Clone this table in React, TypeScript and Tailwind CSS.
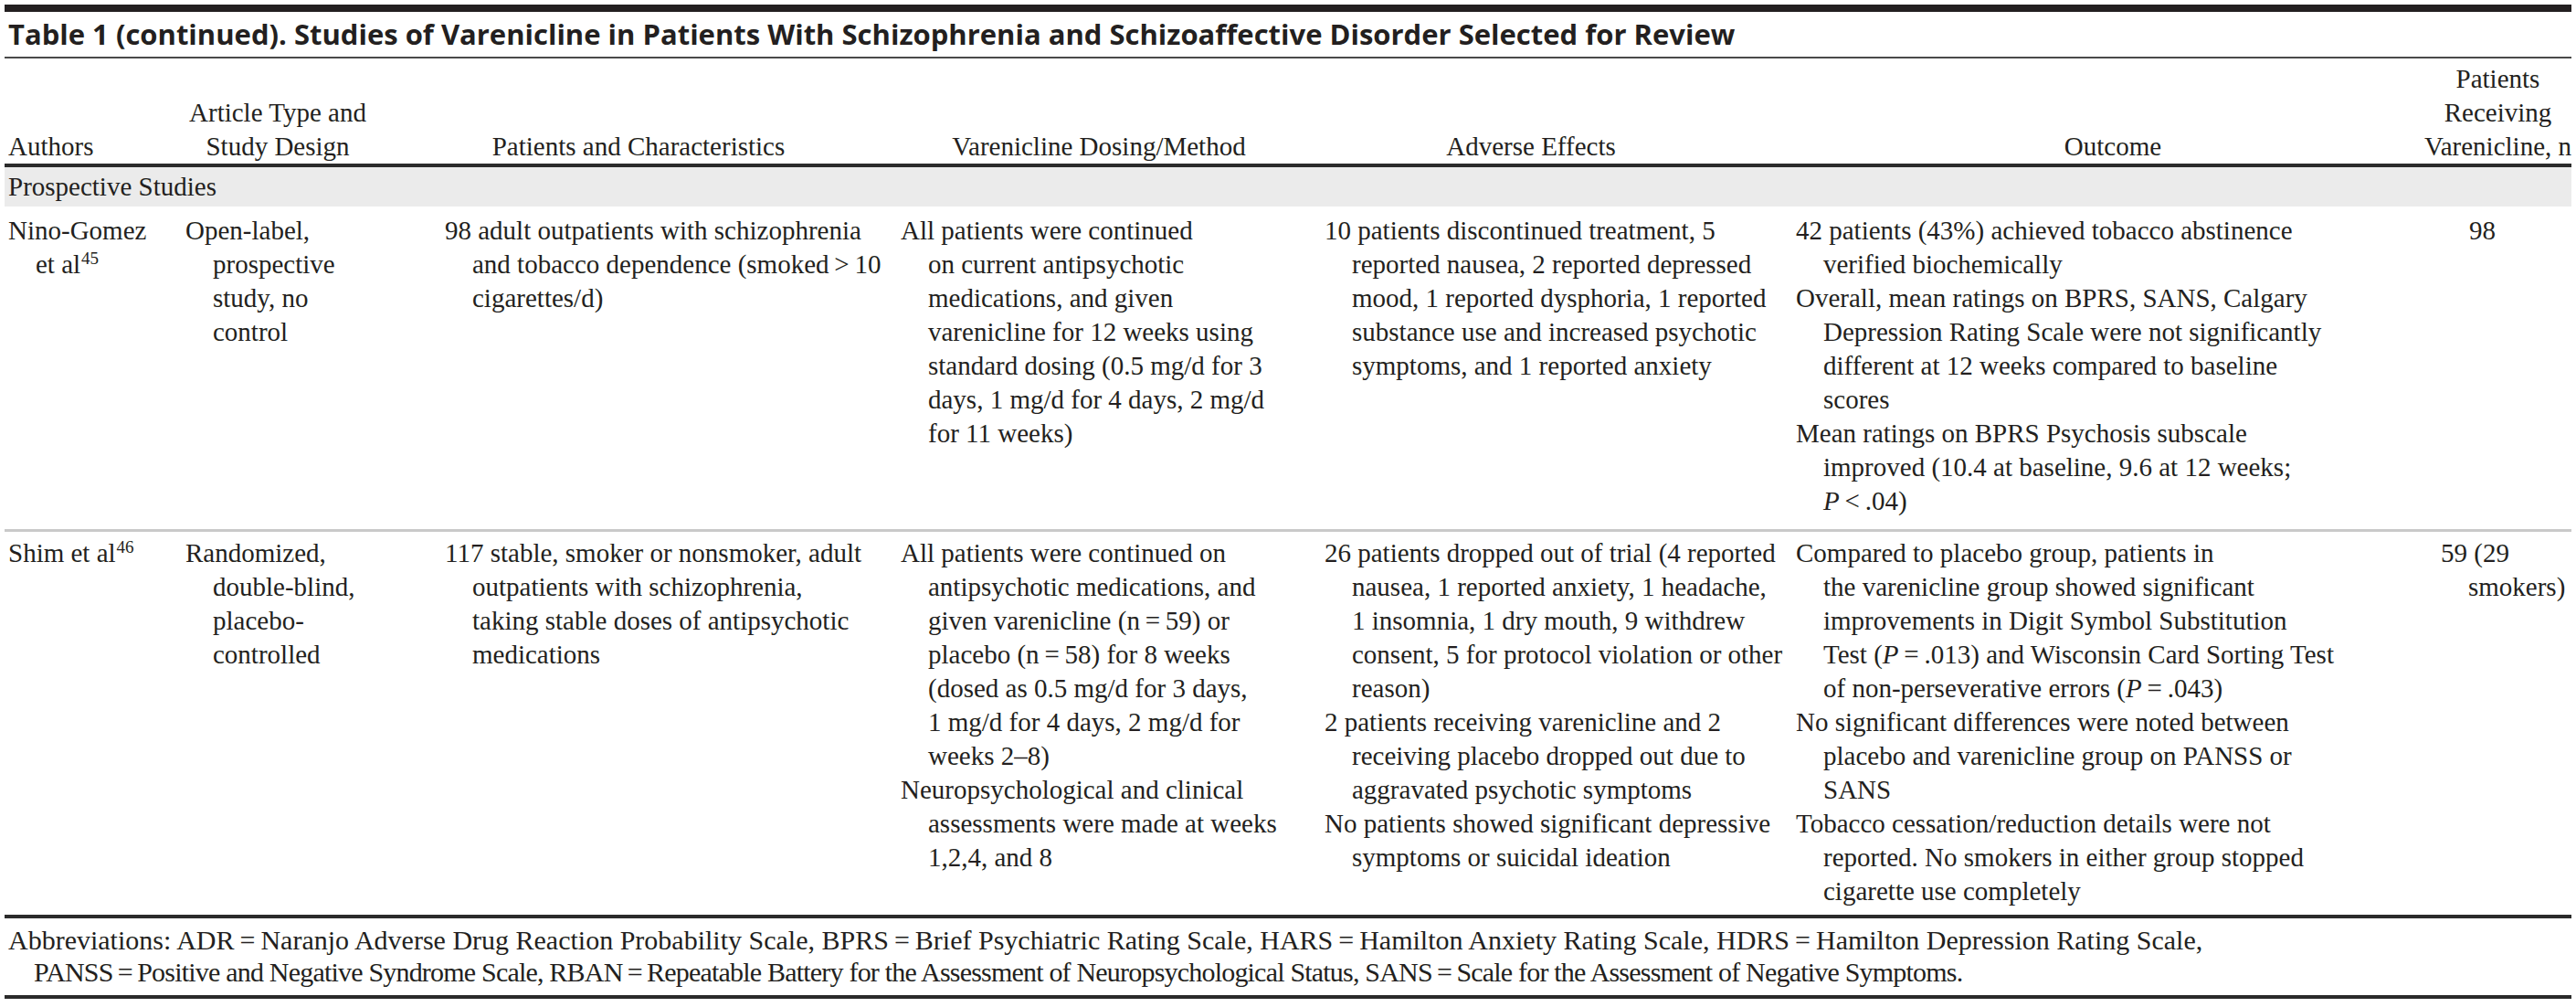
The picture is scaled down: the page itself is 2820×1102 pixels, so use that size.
import React from 'react';

type Line = React.ReactNode;
type Para = Line[];

const cols = 'grid grid-cols-[194px_284px_499px_464px_516px_706px_minmax(0,1fr)]';

const P = () => <i>P</i>;
const T = '\u2009';

function Cell({ paras, className = '' }: { paras: Para[]; className?: string }) {
  return (
    <div className={`pl-[4px] ${className}`}>
      {paras.map((lines, i) => (
        <div key={i} className="pl-[30px] -indent-[30px] whitespace-nowrap">
          {lines.map((line, j) => (
            <React.Fragment key={j}>
              {j > 0 && <br />}
              {line}
            </React.Fragment>
          ))}
        </div>
      ))}
    </div>
  );
}

function Sup({ children }: { children: React.ReactNode }) {
  return <sup className="text-[19px] leading-none relative -top-[10px] ml-[1px]">{children}</sup>;
}

const rows: { paras: Para[]; className?: string }[][] = [
  [
    { paras: [['Nino-Gomez', <>et al<Sup>45</Sup></>]] },
    { paras: [['Open-label,', 'prospective', 'study, no', 'control']] },
    {
      paras: [[
        '98 adult outpatients with schizophrenia',
        `and tobacco dependence (smoked${T}>${T}10`,
        'cigarettes/d)',
      ]],
    },
    {
      paras: [[
        'All patients were continued',
        'on current antipsychotic',
        'medications, and given',
        'varenicline for 12 weeks using',
        'standard dosing (0.5 mg/d for 3',
        'days, 1 mg/d for 4 days, 2 mg/d',
        'for 11 weeks)',
      ]],
    },
    {
      paras: [[
        '10 patients discontinued treatment, 5',
        'reported nausea, 2 reported depressed',
        'mood, 1 reported dysphoria, 1 reported',
        'substance use and increased psychotic',
        'symptoms, and 1 reported anxiety',
      ]],
    },
    {
      paras: [
        ['42 patients (43%) achieved tobacco abstinence', 'verified biochemically'],
        [
          'Overall, mean ratings on BPRS, SANS, Calgary',
          'Depression Rating Scale were not significantly',
          'different at 12 weeks compared to baseline',
          'scores',
        ],
        [
          'Mean ratings on BPRS Psychosis subscale',
          'improved (10.4 at baseline, 9.6 at 12 weeks;',
          <><P />{T}&lt;{T}.04)</>,
        ],
      ],
    },
    { paras: [['98']], className: 'pl-[35px]' },
  ],
  [
    { paras: [[<>Shim et al<Sup>46</Sup></>]] },
    { paras: [['Randomized,', 'double-blind,', 'placebo-', 'controlled']] },
    {
      paras: [[
        '117 stable, smoker or nonsmoker, adult',
        'outpatients with schizophrenia,',
        'taking stable doses of antipsychotic',
        'medications',
      ]],
    },
    {
      paras: [
        [
          'All patients were continued on',
          'antipsychotic medications, and',
          `given varenicline (n${T}=${T}59) or`,
          `placebo (n${T}=${T}58) for 8 weeks`,
          '(dosed as 0.5 mg/d for 3 days,',
          '1 mg/d for 4 days, 2 mg/d for',
          'weeks 2\u20138)',
        ],
        ['Neuropsychological and clinical', 'assessments were made at weeks', '1,2,4, and 8'],
      ],
    },
    {
      paras: [
        [
          '26 patients dropped out of trial (4 reported',
          'nausea, 1 reported anxiety, 1 headache,',
          '1 insomnia, 1 dry mouth, 9 withdrew',
          'consent, 5 for protocol violation or other',
          'reason)',
        ],
        [
          '2 patients receiving varenicline and 2',
          'receiving placebo dropped out due to',
          'aggravated psychotic symptoms',
        ],
        ['No patients showed significant depressive', 'symptoms or suicidal ideation'],
      ],
    },
    {
      paras: [
        [
          'Compared to placebo group, patients in',
          'the varenicline group showed significant',
          'improvements in Digit Symbol Substitution',
          <>Test (<P />{T}={T}.013) and Wisconsin Card Sorting Test</>,
          <>of non-perseverative errors (<P />{T}={T}.043)</>,
        ],
        [
          'No significant differences were noted between',
          'placebo and varenicline group on PANSS or',
          'SANS',
        ],
        [
          'Tobacco cessation/reduction details were not',
          'reported. No smokers in either group stopped',
          'cigarette use completely',
        ],
      ],
    },
    { paras: [['59 (29', 'smokers)']] },
  ],
];

export default function App() {
  return (
    <div className="w-[2820px] h-[1102px] overflow-hidden bg-white px-[5px] text-[#231f20] font-['Liberation_Serif','Times_New_Roman',serif] text-[29px] leading-[37px]">
      <div className="mt-[5px] h-[8px] bg-[#231f20]" />
      <h1 className="mt-[4px] pl-[4px] font-['Open_Sans',sans-serif] font-bold text-[31px] leading-[40px] whitespace-nowrap">
        Table 1 (continued). Studies of Varenicline in Patients With Schizophrenia and Schizoaffective Disorder Selected for Review
      </h1>
      <div className="mt-[5px] h-[2px] bg-[#4a4a4a]" />

      {/* Header */}
      <div className={`${cols} items-end pt-[4px]`}>
        <div className="pl-[4px]">Authors</div>
        <div className="pl-[4px] pr-[78px] text-center">Article Type and<br />Study Design</div>
        <div className="pl-[4px] pr-[71px] text-center">Patients and Characteristics</div>
        <div className="pl-[4px] pr-[26px] text-center">Varenicline Dosing/Method</div>
        <div className="pl-[4px] pr-[60px] text-center">Adverse Effects</div>
        <div className="pl-[4px] pr-[8px] text-center">Outcome</div>
        <div className="flex justify-end">
          <div className="text-center whitespace-nowrap">Patients<br />Receiving<br />Varenicline, n</div>
        </div>
      </div>
      <div className="h-[4px] bg-[#2b2b2b]" />

      <div className="bg-[#ebebeb] py-[3px] pl-[4px]">Prospective Studies</div>

      <div className={`${cols} pt-[8px] pb-[12px]`}>
        {rows[0].map((c, i) => <Cell key={i} {...c} />)}
      </div>
      <div className="h-[3px] bg-[#c9c9c9]" />
      <div className={`${cols} pt-[5px] pb-[7px]`}>
        {rows[1].map((c, i) => <Cell key={i} {...c} />)}
      </div>
      <div className="h-[4px] bg-[#2b2b2b]" />

      {/* Footnote */}
      <div className="pt-[6px] pb-[8px] pl-[4px] text-[30px] leading-[35px] whitespace-nowrap">
        <div>
          Abbreviations: ADR{T}={T}Naranjo Adverse Drug Reaction Probability Scale, BPRS{T}={T}Brief Psychiatric Rating Scale, HARS{T}={T}Hamilton Anxiety Rating Scale, HDRS{T}={T}Hamilton Depression Rating Scale,
        </div>
        <div className="pl-[28px] tracking-[-0.8px]">
          PANSS{T}={T}Positive and Negative Syndrome Scale, RBAN{T}={T}Repeatable Battery for the Assessment of Neuropsychological Status, SANS{T}={T}Scale for the Assessment of Negative Symptoms.
        </div>
      </div>
      <div className="h-[4px] bg-[#2b2b2b]" />
    </div>
  );
}
